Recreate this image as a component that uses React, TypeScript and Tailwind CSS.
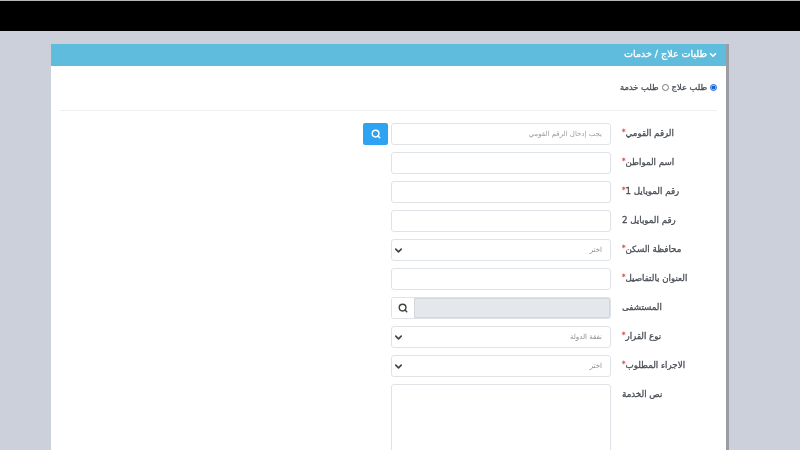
import React from "react";
import { ChevronDown, Search } from "lucide-react";

const font = "font-['DejaVu_Sans','Noto_Sans',sans-serif]";
const inputCls =
  "block h-[22px] w-[220px] rounded-[3px] border border-[#dfe2e6] bg-white px-2 text-[7px] text-[#8a8f96] placeholder:text-[#9a9ea5] outline-none " + font;

function Label({ text, req }: { text: string; req?: boolean }) {
  return (
    <label dir="rtl" className="block text-left text-[8.7px] font-normal leading-[14px] text-[#4a4f56] [-webkit-text-stroke:0.3px_#4a4f56]">
      {text}
      {req && <span className="align-[2px] text-[7px] text-[#d9534f] [-webkit-text-stroke:0.3px_#d9534f]">*</span>}
    </label>
  );
}

function Sel({ value }: { value: string }) {
  return (
    <div className="relative h-[22px] w-[220px]">
      <select dir="rtl" defaultValue={value} className={inputCls + " appearance-none"}>
        <option>{value}</option>
      </select>
      <ChevronDown size={11} strokeWidth={3.5} className="pointer-events-none absolute left-[2px] top-[6px] text-[#444]" />
    </div>
  );
}

function Row({ label, req, children, btn, top }: { label: string; req?: boolean; children: React.ReactNode; btn?: React.ReactNode; top?: boolean }) {
  return (
    <div className="grid grid-cols-[25px_220px_auto] items-center gap-x-[3px]">
      <div>{btn}</div>
      {children}
      <div className={"pl-[8px] " + (top ? "self-start pt-[3px]" : "pb-[3px]")}>
        <Label text={label} req={req} />
      </div>
    </div>
  );
}

export default function App() {
  return (
    <div className={"h-[450px] w-[800px] overflow-hidden bg-[#cbd0da] blur-[0.4px] " + font}>
      <div className="h-[31px] border-t border-[#b5b7bb] bg-black" />
      <div className="ml-[51px] mt-[13px] w-[675px] bg-white shadow-[3px_0_0_#9a9da3]">
        <div dir="rtl" className="flex h-[22px] items-center gap-[1px] bg-[#5fbcdd] pr-[8px] text-[9.5px] font-normal text-white [-webkit-text-stroke:0.3px_#ffffff]">
          <ChevronDown size={10} strokeWidth={4} />
          <span className="pb-[1px]">طلبات علاج / خدمات</span>
        </div>
        <div className="mx-[9px] flex h-[45px] items-center justify-end border-b border-[#eeeff1]">
          <div dir="rtl" className="flex items-center gap-[3px] pb-[1px] text-[8.3px] text-[#4a4f56] [-webkit-text-stroke:0.3px_#4a4f56]">
            <input type="radio" name="kind" defaultChecked className="m-0 h-[7px] w-[7px] accent-[#1a5fd0]" />
            <span>طلب علاج</span>
            <input type="radio" name="kind" className="m-0 h-[7px] w-[7px]" />
            <span>طلب خدمة</span>
          </div>
        </div>
        <div className="flex flex-col gap-[7px] pl-[312px] pt-[12px]">
          <Row
            label="الرقم القومي"
            req
            btn={
              <button className="flex h-[22px] w-[25px] items-center justify-center rounded-[2px] bg-[#2ea3f2] text-white">
                <Search size={10} strokeWidth={3.5} />
              </button>
            }
          >
            <input dir="rtl" className={inputCls} placeholder="يجب إدخال الرقم القومي" />
          </Row>
          <Row label="اسم المواطن" req><input className={inputCls} /></Row>
          <Row label="رقم الموبايل 1" req><input className={inputCls} /></Row>
          <Row label="رقم الموبايل 2"><input className={inputCls} /></Row>
          <Row label="محافظة السكن" req><Sel value="اختر" /></Row>
          <Row label="العنوان بالتفاصيل" req><input className={inputCls} /></Row>
          <Row label="المستشفى">
            <div className="flex h-[22px] w-[220px] overflow-hidden rounded-[3px] border border-[#dfe2e6]">
              <span className="flex w-[22px] items-center justify-center bg-white text-[#444]">
                <Search size={10} strokeWidth={3.5} />
              </span>
              <input disabled className="min-w-0 flex-1 border border-[#d3d7dc] bg-[#e4e7ec]" />
            </div>
          </Row>
          <Row label="نوع القرار" req><Sel value="نفقة الدولة" /></Row>
          <Row label="الاجراء المطلوب" req><Sel value="اختر" /></Row>
          <Row label="نص الخدمة" top>
            <textarea className="block h-[90px] w-[220px] resize-none rounded-[3px] border border-[#dfe2e6] bg-white outline-none" />
          </Row>
        </div>
      </div>
    </div>
  );
}
